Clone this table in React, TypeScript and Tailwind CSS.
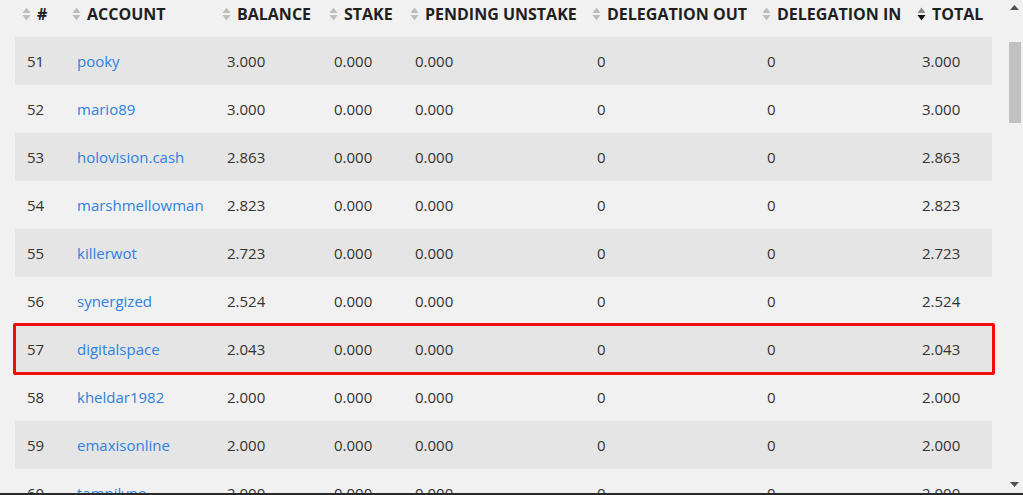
import React from 'react';

type Row = {
  n: number;
  account: string;
  balance: string;
  stake: string;
  pending: string;
  out: string;
  inn: string;
  total: string;
};

const rows: Row[] = [
  { n: 51, account: 'pooky', balance: '3.000', stake: '0.000', pending: '0.000', out: '0', inn: '0', total: '3.000' },
  { n: 52, account: 'mario89', balance: '3.000', stake: '0.000', pending: '0.000', out: '0', inn: '0', total: '3.000' },
  { n: 53, account: 'holovision.cash', balance: '2.863', stake: '0.000', pending: '0.000', out: '0', inn: '0', total: '2.863' },
  { n: 54, account: 'marshmellowman', balance: '2.823', stake: '0.000', pending: '0.000', out: '0', inn: '0', total: '2.823' },
  { n: 55, account: 'killerwot', balance: '2.723', stake: '0.000', pending: '0.000', out: '0', inn: '0', total: '2.723' },
  { n: 56, account: 'synergized', balance: '2.524', stake: '0.000', pending: '0.000', out: '0', inn: '0', total: '2.524' },
  { n: 57, account: 'digitalspace', balance: '2.043', stake: '0.000', pending: '0.000', out: '0', inn: '0', total: '2.043' },
  { n: 58, account: 'kheldar1982', balance: '2.000', stake: '0.000', pending: '0.000', out: '0', inn: '0', total: '2.000' },
  { n: 59, account: 'emaxisonline', balance: '2.000', stake: '0.000', pending: '0.000', out: '0', inn: '0', total: '2.000' },
  { n: 60, account: 'tamnilyne', balance: '2.000', stake: '0.000', pending: '0.000', out: '0', inn: '0', total: '2.000' },
];

const columns = [
  { label: '#', width: 'w-[50px]' },
  { label: 'ACCOUNT', width: 'w-[150px]' },
  { label: 'BALANCE', width: 'w-[107px]' },
  { label: 'STAKE', width: 'w-[81px]' },
  { label: 'PENDING UNSTAKE', width: 'w-[182px]' },
  { label: 'DELEGATION OUT', width: 'w-[170px]' },
  { label: 'DELEGATION IN', width: 'w-[155px]' },
  { label: 'TOTAL', width: 'w-[82px]' },
];

function SortIcon({ active }: { active?: boolean }) {
  return (
    <svg width="9" height="16" viewBox="0 0 9 16" className="shrink-0">
      <path d="M4.5 1.5 L8.5 7 L0.5 7 Z" fill={active ? '#8a8a8a' : '#bdbdbd'} />
      <path d="M4.5 14.5 L8.5 9 L0.5 9 Z" fill={active ? '#111111' : '#bdbdbd'} />
    </svg>
  );
}

export default function App() {
  return (
    <div
      className="flex w-[1023px] h-[495px] overflow-hidden bg-[#f1f1f1] border-b-2 border-[#2a2a2a] text-[15px] text-[#333]"
      style={{ fontFamily: '"Open Sans", "Noto Sans", sans-serif' }}
    >
      <div className="flex-1 pl-[15px] pr-[14px]">
        <table className="w-[977px] table-fixed border-collapse">
          <thead>
            <tr className="h-[37px]">
              {columns.map((c, i) => (
                <th
                  key={c.label}
                  className={`${c.width} pl-[7px] pb-[9px] text-left text-[16px] font-bold text-[#1f1f1f] whitespace-nowrap`}
                >
                  <span className="flex items-center gap-[6px]">
                    <SortIcon active={i === 7} />
                    {c.label}
                  </span>
                </th>
              ))}
            </tr>
          </thead>
          <tbody>
            {rows.map((r, i) => (
              <tr key={r.n} className={`h-[48px] ${i % 2 === 0 ? 'bg-[#e5e5e5]' : ''}`}>
                <td className="pl-[12px]">{r.n}</td>
                <td className="pl-[12px] text-[#2f80e0] whitespace-nowrap">{r.account}</td>
                <td className="pl-[12px]">{r.balance}</td>
                <td className="pl-[12px]">{r.stake}</td>
                <td className="pl-[12px]">{r.pending}</td>
                <td className="pl-[12px]">{r.out}</td>
                <td className="pl-[12px]">{r.inn}</td>
                <td className="pl-[12px] relative">
                  {r.total}
                  {r.n === 57 && (
                    <span className="absolute -top-[2px] -bottom-[2px] right-[-3px] w-[982px] border-[3px] border-[#f20d0d] rounded-[2px] pointer-events-none" />
                  )}
                </td>
              </tr>
            ))}
          </tbody>
        </table>
      </div>
      <div className="w-[17px] flex flex-col items-center bg-[#f1f1f1]">
        <svg width="9" height="6" viewBox="0 0 9 6" className="mt-[5px]">
          <path d="M4.5 0 L9 5 L0 5 Z" fill="#505050" />
        </svg>
        <div className="mt-[31px] w-[12px] h-[81px] bg-[#c1c1c1]" />
        <div className="flex-1" />
        <svg width="9" height="6" viewBox="0 0 9 6" className="mb-[6px]">
          <path d="M0 1 L9 1 L4.5 6 Z" fill="#505050" />
        </svg>
      </div>
    </div>
  );
}
